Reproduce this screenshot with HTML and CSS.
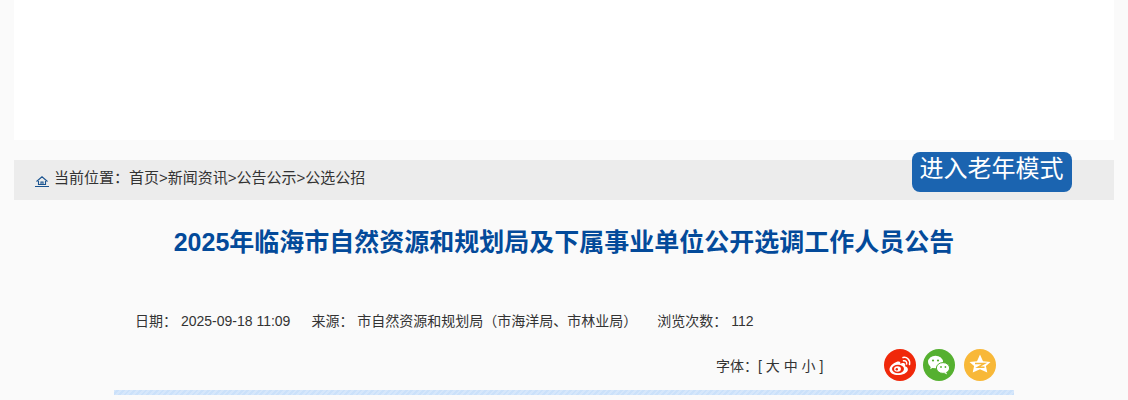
FILE: index.html
```html
<!DOCTYPE html>
<html lang="zh-CN">
<head>
  <meta charset="UTF-8" />
  <title>公告</title>
  <link rel="stylesheet" href="styles.css">
</head>
<body>
  <div class="top-blank"></div>
  <div class="crumb-bar">
    <svg class="home-icon" width="14" height="11" viewBox="0 0 14 11">
      <path d="M1.500 5.500 7 .8l5.500 4.700M3.500 5v3.500h7V5M6 8.500V6h2v2.500" fill="none" stroke="#1a5490" stroke-width="1.100"/>
      <path d="M0 10.500h14" stroke="#1a5490" stroke-width="1"/>
    </svg>
    <span class="crumb-text">当前位置：</span>
    <span class="crumb-links">首页&gt;新闻资讯&gt;公告公示&gt;公选公招</span>
    <a class="elder-btn">进入老年模式</a>
  </div>
  <h1 class="title">2025年临海市自然资源和规划局及下属事业单位公开选调工作人员公告</h1>
  <div class="meta">
    <span class="meta-date">日期：&nbsp;2025-09-18 11:09</span>
    <span class="meta-source">来源：&nbsp;市自然资源和规划局（市海洋局、市林业局）</span>
    <span class="meta-views">浏览次数：&nbsp;112</span>
  </div>
  <div class="tools">
    <span class="font-size">字体：[ 大 中 小 ]</span>
    <div class="share">
      <span class="share-btn weibo">
        <svg width="32" height="32" viewBox="0 0 32 32">
          <path d="M13.500 12.500c-4.500 1.800-8.500 5-8 8.600.5 3.500 5 5.400 10 4.900 5-.5 9-3.200 8.300-6.300-.3-1.500-1.800-2.200-2.800-2.500.6-1.500.4-2.700-.8-3-1.300-.3-3 .2-4 .8.400-1.700.2-3-2.700-2.500z" fill="#fff"/>
          <ellipse cx="14" cy="20" rx="6" ry="4.200" fill="#f0280a"/>
          <ellipse cx="13.500" cy="20" rx="3.400" ry="2.700" fill="#fff"/>
          <circle cx="12.800" cy="20.300" r="1.200" fill="#f0280a"/>
          <path d="M19 8.500c4-.8 7.500 2.400 6.500 7M19.500 11.800c2.200-.4 3.600 1.100 3.100 3.200" fill="none" stroke="#fff" stroke-width="1.500" stroke-linecap="round"/>
        </svg>
      </span>
      <span class="share-btn wechat">
        <svg width="32" height="32" viewBox="0 0 32 32">
          <ellipse cx="12.500" cy="13" rx="7.500" ry="6.300" fill="#fff"/>
          <path d="M8 17l-.8 3.200 3.400-2z" fill="#fff"/>
          <ellipse cx="20" cy="19" rx="6.600" ry="5.400" fill="#fff" stroke="#55b030" stroke-width="1"/>
          <path d="M23 23l1.200 2.600-3.400-1.800z" fill="#fff"/>
          <circle cx="10" cy="11.500" r="1.100" fill="#55b030"/>
          <circle cx="15" cy="11.500" r="1.100" fill="#55b030"/>
          <circle cx="18" cy="18" r=".9" fill="#55b030"/>
          <circle cx="22.400" cy="18" r=".9" fill="#55b030"/>
        </svg>
      </span>
      <span class="share-btn qzone">
        <svg width="32" height="32" viewBox="0 0 32 32">
          <path d="M16 5.500l3 6.700 7.500.8-4.600 4 1.400 6.500-7.300-3.300-7.300 3.300 1.400-6.500-4.600-4 7.500-.8z" fill="#fff"/>
          <path d="M11 14.500h9.500l-6.500 3.700h6.500" fill="none" stroke="#f8b838" stroke-width="1.500"/>
        </svg>
      </span>
    </div>
  </div>
  <div class="divider"></div>
</body>
</html>
```

FILE: styles.css
```css
html, body {
  margin: 0;
  padding: 0;
}
body {
  width: 1128px;
  height: 400px;
  overflow: hidden;
  background-color: #fafafa;
  font-family: "Liberation Sans", "Noto Sans CJK SC", sans-serif;
  color: #333;
}
.top-blank {
  width: 1100px;
  height: 140px;
  margin: 0 14px 20px;
  background-color: #fff;
}
.crumb-bar {
  display: flex;
  align-items: center;
  width: 1100px;
  height: 40px;
  margin: 0 14px;
  padding: 0 0 7px 21px;
  box-sizing: border-box;
  background-color: #ececec;
  font-size: 15px;
  position: relative;
}
.home-icon {
  margin: 9px 5px 0 0;
}
.crumb-text {
  width: 75px;
}
.elder-btn {
  position: absolute;
  left: 898px;
  top: -8px;
  width: 160px;
  height: 40px;
  box-sizing: border-box;
  padding-top: 2px;
  border-radius: 8px;
  background-color: #1b64b0;
  color: #fff;
  font-size: 24px;
  line-height: 30px;
  text-align: center;
  text-indent: -1px;
}
.title {
  margin: 27px 0 0;
  height: 30px;
  line-height: 30px;
  text-align: center;
  font-size: 25px;
  font-weight: bold;
  color: #034a9a;
}
.meta {
  display: flex;
  margin-top: 49px;
  padding-left: 135px;
  height: 30px;
  line-height: 30px;
  font-size: 14px;
}
.meta-date {
  margin-right: 21px;
}
.meta-source {
  margin-right: 20px;
}
.tools {
  display: flex;
  align-items: center;
  height: 32px;
  margin-top: 13px;
  padding-left: 716px;
  font-size: 14px;
}
.font-size {
  width: 168px;
}
.share {
  display: flex;
  gap: 7px;
}
.share-btn {
  display: block;
  width: 32px;
  height: 32px;
  border-radius: 50%;
}
.weibo { background-color: #f0280a; }
.wechat { background-color: #55b030; }
.qzone {
  margin-left: 2px;
  background-color: #f8b838;
}
.divider {
  width: 900px;
  height: 5px;
  margin: 9px 0 0 114px;
  background: repeating-linear-gradient(135deg, #d6e7fb 0 2px, #cbe1fa 2px 4px);
}
```
